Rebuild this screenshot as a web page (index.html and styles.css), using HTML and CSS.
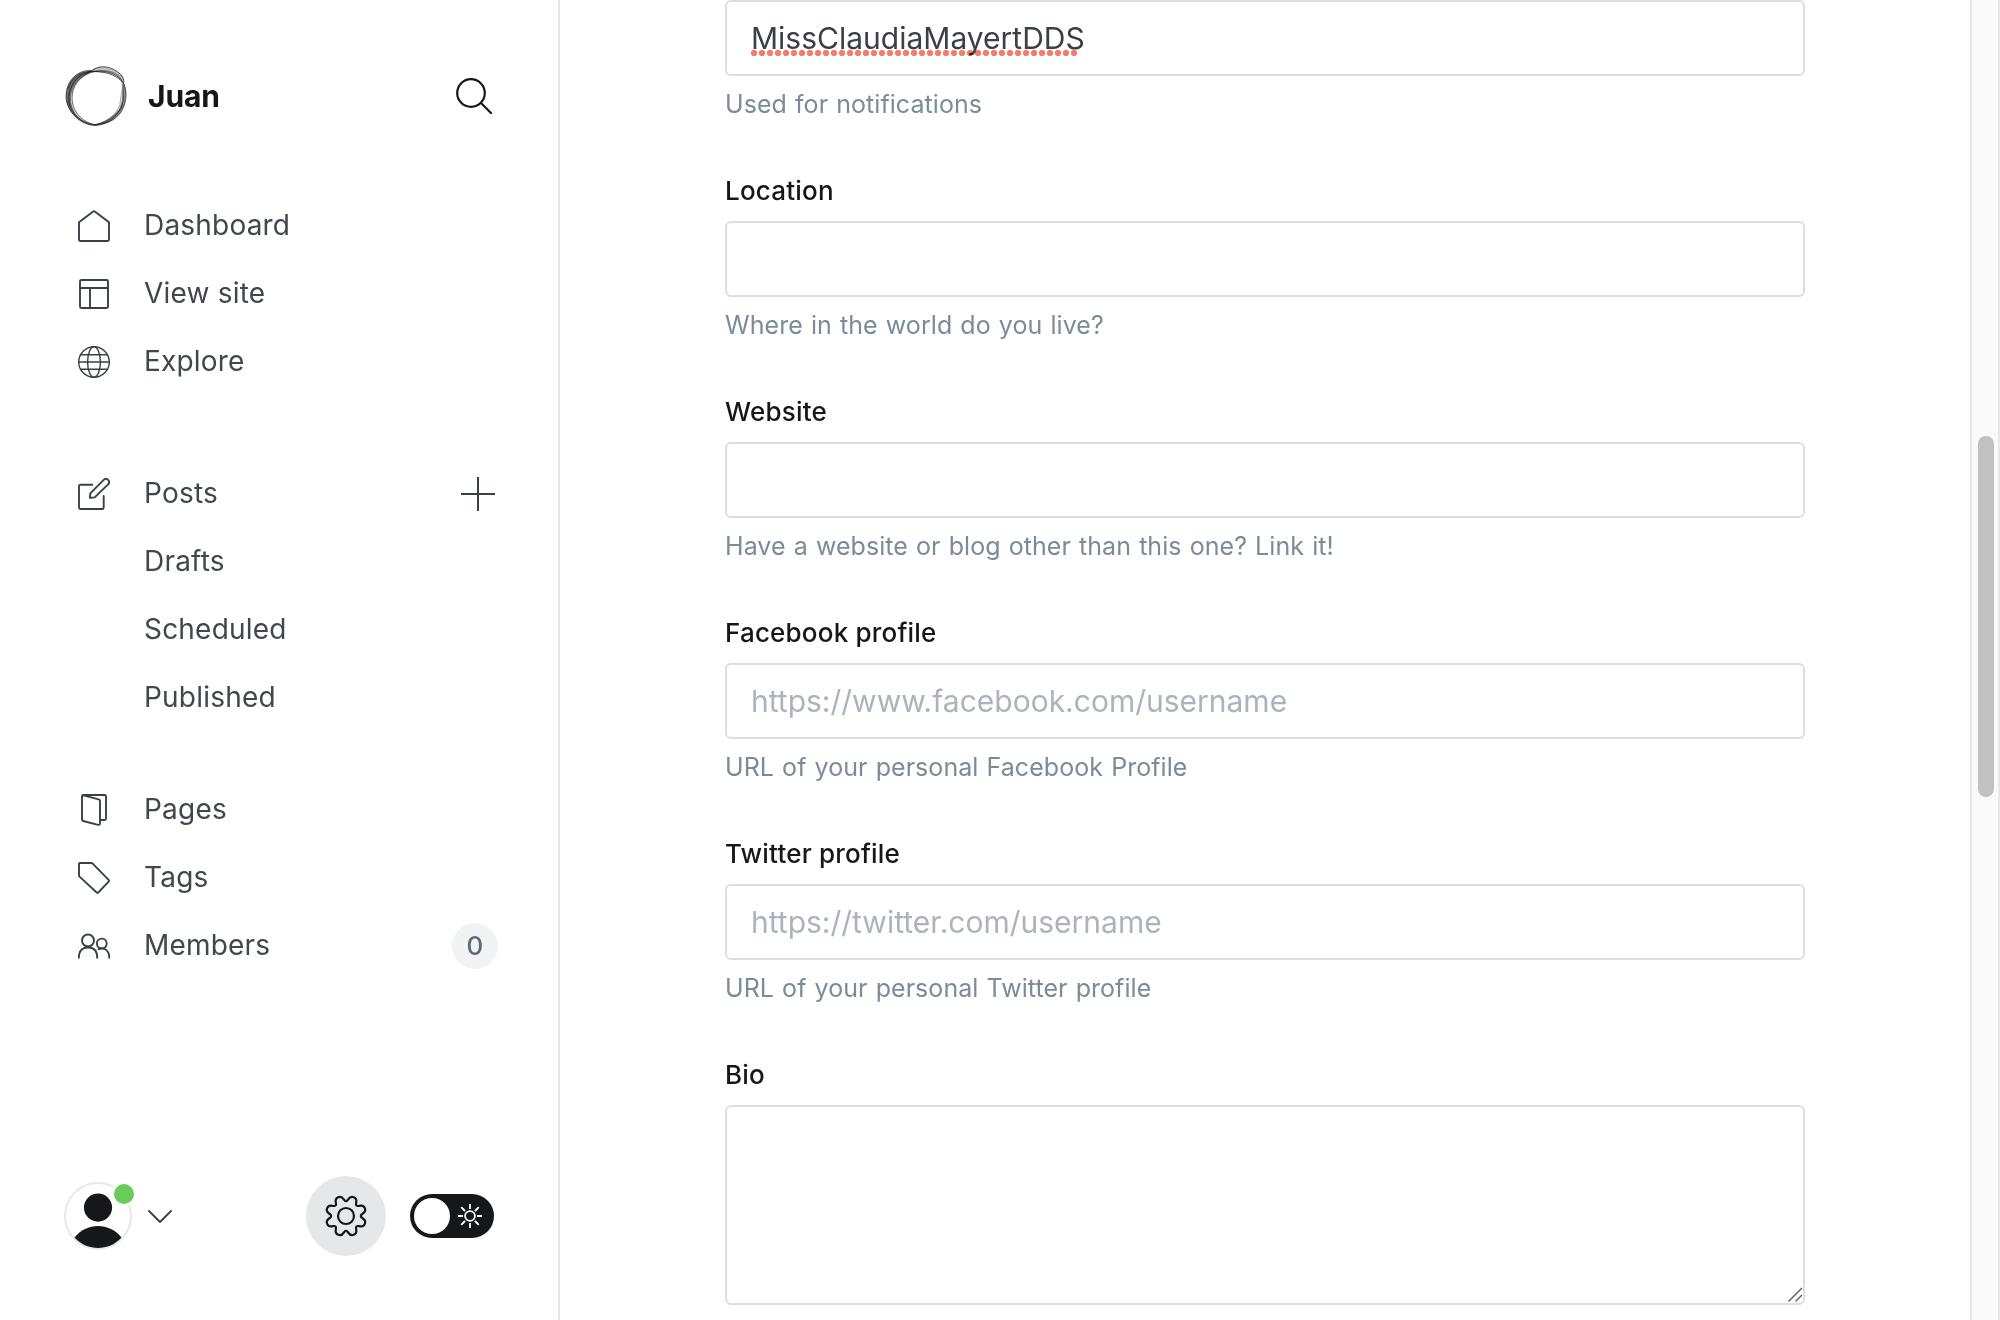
FILE: index.html
```html
<!DOCTYPE html>
<html lang="en">
<head>
<meta charset="utf-8">
<title>Profile settings</title>
<link rel="stylesheet" href="styles.css">
</head>
<body>
<div class="app">
  <aside class="sidebar">
    <header class="brand">
      <svg class="brand-logo" width="62" height="62" viewBox="-31 -31 62 62">
        <g fill="#15171a" stroke="none">
          <path fill-opacity=".6" d="M-5-25C-20-26-30-14-30 1C-29 16-16 28-1 29.500C-14 27-25 17-25 2C-24-12-14-22 0-24Z"/>
          <path fill-opacity=".28" d="M-6-25C2-32 16-30 25-22C29-19 27-16 28-13C22-21 12-24 2-23.500Z"/>
          <path fill-opacity=".5" d="M28-13C31-5 31 6 25 16C18 26 8 29-2 29.500C8 25 18 21 23 13C27 6 26-4 28-13Z"/>
        </g>
        <g fill="none" stroke="#15171a" stroke-width="1" stroke-opacity=".7">
          <path d="M-5-25.500C-20-26-30-14-30 1C-29 16-16 29 0 29.500C13 28 20 21 25 12C29 3 26-6 27.500-13C30-20 16-31 4-29C-1-28-5-25-9-22C-18-17-24-9-24 2C-24 16-13 27 0 29"/>
          <path d="M-28-7C-24-20-12-26 0-24.500C12-24 22-20 28-12C31-4 31 6 25 16C18 26 9 28-2 28.500C-14 27-25 19-27 5C-28-8-20-21-7-24C4-26 18-26 27-14"/>
          <path stroke-width=".6" d="M-26 10C-31-2-24-18-10-23C1-25 14-28 23-20C30-12 24 0 24 9C19 20 12 26 0 28.500M-29 5C-27 16-17 27-4 29C9 28 20 22 27 8"/>
        </g>
      </svg>
      <span class="brand-name">Juan</span>
      <svg class="search" width="36" height="36" viewBox="0 0 36 36" fill="none" stroke="#15171a" stroke-width="2.2" stroke-linecap="round"><circle cx="15" cy="15" r="13.8"/><path d="M25 25L35 35"/></svg>
    </header>
    <nav class="nav">
      <ul class="group">
        <li class="item"><svg class="icon" viewBox="0 0 32 32"><path d="M1 12.2L15.2 1.4Q16 .8 16.8 1.4L31 12.2V29.5Q31 31 29.5 31H2.5Q1 31 1 29.5Z"/></svg><span class="name">Dashboard</span></li>
        <li class="item"><svg class="icon" viewBox="0 0 32 32"><rect x="2" y="2" width="28" height="28" rx="1.5"/><path d="M2 10H30M12 10V30"/></svg><span class="name">View site</span></li>
        <li class="item"><svg class="icon thin" viewBox="0 0 32 32"><circle cx="16" cy="16" r="15.3"/><ellipse cx="16" cy="16" rx="6.4" ry="15.3"/><path d="M2.5 8.8H29.5M.7 16H31.3M2.5 23.2H29.5"/></svg><span class="name">Explore</span></li>
      </ul>
      <ul class="group posts">
        <li class="item"><svg class="icon" viewBox="0 0 32 32"><path d="M14.3 6.7H2.5Q1 6.7 1 8.2V29.5Q1 31 2.5 31H24.2Q25.7 31 25.7 29.5V18M11.9 19.9L12.3 15.3L25.7 1.9A3.1 3.1 0 0 1 30.1 6.3L16.7 19.4Z"/></svg><span class="name">Posts</span>
          <svg class="plus" width="34" height="34" viewBox="0 0 34 34" fill="none" stroke="#394047" stroke-width="2"><path d="M17 0V34M0 17H34"/></svg></li>
        <li class="item sub"><span class="name">Drafts</span></li>
        <li class="item sub"><span class="name">Scheduled</span></li>
        <li class="item sub"><span class="name">Published</span></li>
      </ul>
      <ul class="group">
        <li class="item"><svg class="icon" viewBox="0 0 32 32"><path d="M5.3 1H26.5Q28 1 28 2.5V24.5Q28 26 26.5 26H22M5.3 1.3L20.8 5.4Q22 5.8 22 7V29.2Q22 31.2 20 30.8L5.2 27Q4 26.7 4 25.4V2.6Q4 1 5.3 1Z"/></svg><span class="name">Pages</span></li>
        <li class="item"><svg class="icon" viewBox="0 0 32 32"><path d="M1 13.4V2Q1 1 2 1H13Q14 1 14.7 1.7L30.6 17.9Q31.4 18.8 30.6 19.7L20.3 30.5Q19.5 31.3 18.7 30.5L1.8 14.9Q1 14.3 1 13.4Z"/></svg><span class="name">Tags</span></li>
        <li class="item"><svg class="icon" viewBox="0 0 32 32"><circle cx="10" cy="10.5" r="6"/><path d="M.8 27.7C.8 21 4.4 17.5 10 17.5S19.2 21 19.2 27.7M20.5 19.2C27 17 31.3 21 31.3 27.7"/><circle cx="23.8" cy="13.5" r="4.9"/></svg><span class="name">Members</span><span class="badge">0</span></li>
      </ul>
    </nav>
    <footer class="tools">
      <div class="avatar">
        <svg width="68" height="68" viewBox="0 0 68 68"><circle cx="34" cy="34" r="33" fill="#fff" stroke="#e5e9ed" stroke-width="2"/><circle cx="34" cy="25.6" r="14.1" fill="#15171a"/><path d="M10.5 55.5C22 40 46 40 57.5 55.5C45 69.500 23 69.500 10.500 55.500Z" fill="#15171a"/></svg>
        <span class="status"></span>
      </div>
      <svg class="chevron" width="24" height="13" viewBox="0 0 24 13" fill="none" stroke="#394047" stroke-width="1.8" stroke-linecap="round" stroke-linejoin="round"><path d="M1 1L12 12L23 1"/></svg>
      <div class="gear">
        <svg width="44" height="44" viewBox="-22 -22 44 44" fill="none" stroke="#15171a" stroke-width="2.2">
          <circle r="8"/>
          <g id="quarter"><path d="M0 -14.8Q1.100 -14.8 2.240 -16.6Q4.480 -20.210 7.8 -18.840Q11.120 -17.460 10.160 -13.330Q9.190 -9.190 13.330 -10.160Q17.460 -11.120 18.840 -7.8Q20.210 -4.480 16.6 -2.240Q14.8 -1.100 14.8 0"/></g>
          <use href="#quarter" transform="rotate(90)"/><use href="#quarter" transform="rotate(180)"/><use href="#quarter" transform="rotate(270)"/>
        </svg>
      </div>
      <div class="toggle">
        <span class="knob"></span>
        <svg width="24" height="24" viewBox="-12 -12 24 24" fill="none" stroke="#fff" stroke-width="1.8"><circle r="4.9"/><path d="M0-12V-7M0 12V7M-12 0H-7M12 0H7M-8.800-8.800L-5-5M8.800 8.800L5 5M-8.800 8.800L-5 5M8.800-8.800L5-5"/></svg>
      </div>
    </footer>
  </aside>
  <main class="content">
    <form class="form">
      <div class="field">
        <div class="control"><span class="misspelled">MissClaudiaMayertDDS</span></div>
        <p class="hint">Used for notifications</p>
      </div>
      <div class="field">
        <label class="label" for="location">Location</label>
        <input class="control" id="location" type="text">
        <p class="hint">Where in the world do you live?</p>
      </div>
      <div class="field">
        <label class="label" for="website">Website</label>
        <input class="control" id="website" type="text">
        <p class="hint">Have a website or blog other than this one? Link it!</p>
      </div>
      <div class="field">
        <label class="label" for="facebook">Facebook profile</label>
        <input class="control" id="facebook" type="text" placeholder="https://www.facebook.com/username">
        <p class="hint">URL of your personal Facebook Profile</p>
      </div>
      <div class="field">
        <label class="label" for="twitter">Twitter profile</label>
        <input class="control" id="twitter" type="text" placeholder="https://twitter.com/username">
        <p class="hint">URL of your personal Twitter profile</p>
      </div>
      <div class="field">
        <label class="label" for="bio">Bio</label>
        <div class="bio-wrap">
          <textarea class="control bio" id="bio"></textarea>
          <svg class="grip" width="16" height="16" viewBox="0 0 16 16" fill="none" stroke="#555" stroke-width="1.300"><path d="M1.500 14.500L15 1M8.500 14.500L15 8"/></svg>
        </div>
      </div>
    </form>
  </main>
  <div class="scrollbar"><div class="thumb"></div></div>
</div>
</body>
</html>
```
FILE: styles.css
```css
* { box-sizing: border-box; }
html, body { margin: 0; height: 100%; overflow: hidden; }
body { background: #fff; color: #394047; font-family: Inter, "Liberation Sans", sans-serif; }
.app { display: flex; width: 2000px; height: 1320px; }

.sidebar { display: flex; flex-direction: column; width: 560px; flex: none; border-right: 2px solid #e6e7e8; }
.brand { display: flex; align-items: center; height: 192px; padding: 0 66px 0 65px; }
.brand-name { margin-left: 21px; font-size: 30px; font-weight: 700; letter-spacing: -.1px; color: #15171a; }
.search { margin-left: auto; }

.nav { flex: 1; }
.group { list-style: none; margin: 0 0 44px; padding: 0; }
.group:first-child { margin-bottom: 64px; }
.item { display: flex; align-items: center; height: 68px; padding: 0 60px 0 78px; font-size: 28px; font-weight: 380; letter-spacing: .2px; color: #40474e; }
.name { margin-bottom: 2px; }
.icon { width: 32px; height: 32px; margin-right: 34px; flex: none; fill: none; stroke: #394047; stroke-width: 1.9; stroke-linecap: round; stroke-linejoin: round; }
.icon.thin { stroke-width: 1.4; }
.sub { padding-left: 144px; }
.plus { margin-left: auto; margin-right: 3px; }
.badge { display: grid; place-items: center; width: 46px; height: 46px; margin-left: auto; margin-bottom: 1px; border-radius: 50%; background: #f1f3f4; color: #5d6b79; font-size: 26px; font-weight: 500; letter-spacing: 0; line-height: 44px; }

.tools { display: flex; align-items: center; height: 80px; margin-bottom: 64px; padding: 0 64px; }
.avatar { position: relative; width: 68px; height: 68px; }
.avatar svg { display: block; }
.status { position: absolute; top: 0; right: -4px; width: 24px; height: 24px; border: 2px solid #fff; border-radius: 50%; background: #68cb5a; }
.chevron { margin-left: 16px; }
.gear { display: grid; place-items: center; width: 80px; height: 80px; margin-left: auto; border-radius: 50%; background: #e6e7e9; }
.toggle { display: flex; align-items: center; justify-content: space-between; width: 84px; height: 44px; margin-left: 24px; padding: 0 12px 0 4px; border-radius: 22px; background: #15171a; }
.knob { width: 36px; height: 36px; border-radius: 50%; background: #fff; }

.content { flex: 1; padding-left: 165px; overflow: hidden; }
.form { display: flex; flex-direction: column; gap: 51px; width: 1080px; }
.label { display: block; height: 36px; margin-bottom: 12px; line-height: 36px; font-size: 26px; font-weight: 500; letter-spacing: .2px; color: #15171a; }
.control { display: flex; align-items: center; width: 100%; height: 76px; padding: 0 24px; border: 2px solid #dddedf; border-radius: 6px; background: #fff; color: #394047; font: 390 30px Inter, "Liberation Sans", sans-serif; outline: 0; }
.control::placeholder { color: #abb4be; opacity: 1; }
.hint { height: 36px; margin: 10px 0 0; line-height: 36px; font-size: 25px; font-weight: 390; letter-spacing: .06px; word-spacing: 1px; color: #7c8b9a; }
.misspelled { position: relative; }
.misspelled::after { content: ""; position: absolute; left: 0; bottom: 0; width: 327px; height: 6px; background: radial-gradient(circle at 3px 3px, #f47b6e 2.8px, transparent 3.5px) 0 0 / 8px 6px; mix-blend-mode: multiply; }
.bio-wrap { position: relative; }
.bio { display: block; height: 200px; resize: none; }
.grip { position: absolute; right: 2px; bottom: 2px; }

.scrollbar { width: 30px; padding: 436px 4px 0 6px; border: solid #e8e8e8; border-width: 0 2px; background: #fafafa; }
.thumb { width: 16px; height: 361px; border-radius: 8px; background: #c1c1c1; }
```
